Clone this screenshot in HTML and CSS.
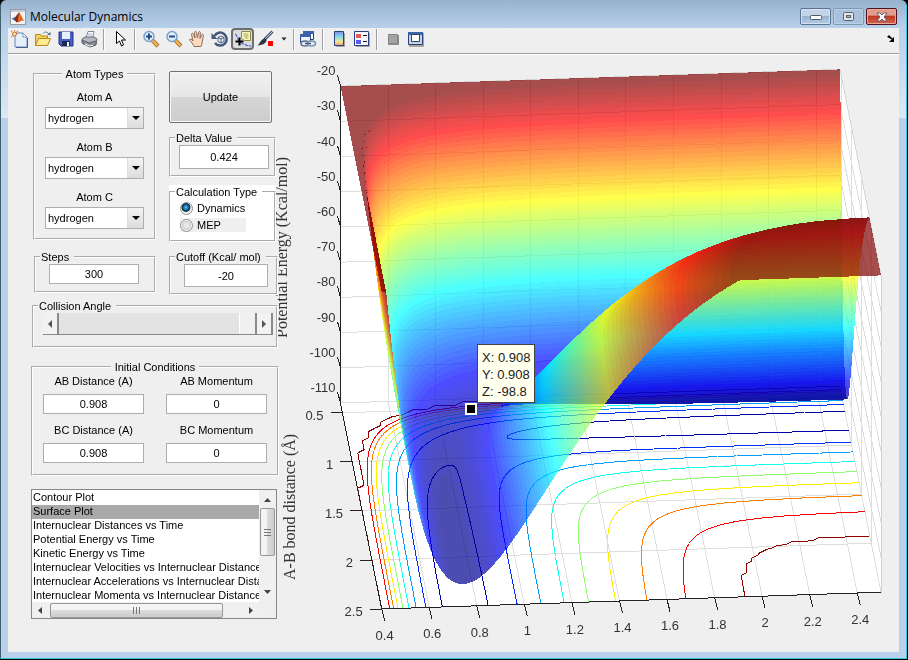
FILE: index.html
```html
<!DOCTYPE html>
<html lang="en">
<head>
<meta charset="utf-8">
<title>Molecular Dynamics</title>
<link rel="stylesheet" href="styles.css">
</head>
<body>
<div class="window">
  <header class="titlebar">
    <svg class="logo" viewBox="0 0 16 16" aria-hidden="true">
      <rect x=".5" y=".5" width="15" height="15" fill="#f4f4f6" stroke="#9a9a9e"/>
      <path d="M1 1h14v2H1z" fill="#c8ccd2"/>
      <path d="M1.500 9.500 5.500 8 8 4.500 9.500 3 8 10 5 12z" fill="#3b78b4"/>
      <path d="M5 8.500 9.300 3.200 9 12.500 6.500 13.500 4.500 10.500z" fill="#8a2c1a"/>
      <path d="M9.300 3.200C11 5 12 9 14.500 12 12 10.500 11 12 8.500 13.500 7 13 8.500 6 9.300 3.200z" fill="#e2692a"/>
    </svg>
    <h1>Molecular Dynamics</h1>
    <div class="winbtns">
      <button type="button" class="winbtn" aria-label="Minimize"><svg width="12" height="6" viewBox="0 0 12 6"><rect x=".5" y="1.500" width="11" height="4" rx="1" fill="#fff" stroke="#4c5a6c"/></svg></button>
      <button type="button" class="winbtn dim" aria-label="Maximize"><svg width="12" height="10" viewBox="0 0 12 10"><rect x=".5" y=".5" width="10" height="8" rx="1" fill="#e3e3e3" stroke="#566374"/><rect x="3.500" y="3.500" width="4" height="2" fill="#9eb4cc" stroke="#566374"/></svg></button>
      <button type="button" class="winbtn close" aria-label="Close"><svg width="12" height="10" viewBox="0 0 12 10"><path d="M1 1h3l2 2 2-2h3L8 5l3 4H8L6 7 4 9H1l3-4z" fill="#fff" stroke="#565a66" stroke-width=".9"/></svg></button>
    </div>
  </header>

  <nav class="toolbar" aria-label="Figure toolbar">
    <button type="button" aria-label="New"><svg viewBox="0 0 18 18"><path d="M4 3h8l4 4v10H4z" fill="#e3f0fb" stroke="#6286b4"/><path d="M12 3v4h4z" fill="#fff" stroke="#6286b4" stroke-width=".8"/><path d="M5 17.500h11.500V8" fill="none" stroke="#45608a"/><circle cx="3.500" cy="4" r="2" fill="#fbe3b0" stroke="#d0672c"/><path d="M0 1l1.500 1M7 1 5.500 2M0 7l1.500-1M3.500 0v1" stroke="#d0672c"/></svg></button>
    <button type="button" aria-label="Open"><svg viewBox="0 0 18 18"><path d="M1.500 15.500v-11h5l1 1.500h6v3" fill="#f3d161" stroke="#b98a1c"/><path d="m1.500 15.500 3-7h12l-3 7z" fill="#fdeb92" stroke="#b98a1c"/><path d="M9 3.500c2-2.500 5-1.500 6 1" fill="none" stroke="#5a7396"/><path d="m13 4.500 3.500 1 .2-3.500z" fill="#5a7396"/></svg></button>
    <button type="button" aria-label="Save"><svg viewBox="0 0 18 18"><path d="M2 2h14v14H4l-2-2z" fill="#4a5fc4" stroke="#27357e"/><path d="M5 2h8v7H5z" fill="#e8f0fd"/><path d="M5 11h8v5H5z" fill="#1f2850"/><path d="M10 12h2v4h-2z" fill="#f1f3fa"/></svg></button>
    <button type="button" aria-label="Print"><svg viewBox="0 0 18 18"><path d="M6 8 8 1.500h6L12.500 8z" fill="#fff" stroke="#7b89a0"/><path d="m2 9 3-2h9l3 2-1 5H3z" fill="#b4b7bd" stroke="#656a74"/><path d="m2 10 7 3 7-2v4l-6 2-8-4z" fill="#898d95" stroke="#5a5e66"/><path d="m5 14 5 2 3-1" stroke="#fff" fill="none"/><path d="m8 4 4 0M8 6l4 0" stroke="#9cb0d2"/></svg></button>
    <i class="sep"></i>
    <button type="button" aria-label="Select"><svg viewBox="0 0 18 18"><path d="M5.500 1.500v12l3-2.500 2 5 2-1-2-5h4z" fill="#fff" stroke="#000"/></svg></button>
    <i class="sep"></i>
    <button type="button" aria-label="Zoom in"><svg viewBox="0 0 18 18"><path d="m10 10 6 6" stroke="#a56217" stroke-width="4"/><path d="m10 10 5.500 5.500" stroke="#f1b250" stroke-width="2.500"/><circle cx="7" cy="6.500" r="5" fill="#dcf0fb" stroke="#7c9fc8" stroke-width="1.500"/><path d="M4 6.500h6M7 3.500v6" stroke="#244a86" stroke-width="2"/></svg></button>
    <button type="button" aria-label="Zoom out"><svg viewBox="0 0 18 18"><path d="m10 10 6 6" stroke="#a56217" stroke-width="4"/><path d="m10 10 5.500 5.500" stroke="#f1b250" stroke-width="2.500"/><circle cx="7" cy="6.500" r="5" fill="#dcf0fb" stroke="#7c9fc8" stroke-width="1.500"/><path d="M4 6.500h6" stroke="#244a86" stroke-width="2"/></svg></button>
    <button type="button" aria-label="Pan"><svg viewBox="0 0 18 18"><path d="M6 16.500C5 13 1 10.500 1.500 9.500s2-.5 3.500 1.500L3.500 4.500c0-1.500 1.500-1.500 2 0L7 8 6.500 2.500c0-1.500 2-1.500 2 0L9.500 8l1-5.500c.3-1.500 2-1.200 1.800.3L12 8.500l1.500-3.500c.6-1.200 2.300-.8 1.800.8C14.500 9 14.500 13 13 16.500z" fill="#fbdcc0" stroke="#8a6a58"/></svg></button>
    <button type="button" aria-label="Rotate"><svg viewBox="0 0 18 18"><path d="M3.500 6A6.500 6.500 0 1 1 4 13" fill="none" stroke="#42587c" stroke-width="2.500"/><path d="M.5 3v6h6z" fill="#42587c"/><path d="m7 7.500 3-1.500 3 1.500v4L10 13l-3-1.500zM7 7.500 10 9l3-1.500M10 9v4" fill="#f5f8fc" stroke="#42587c"/></svg></button>
    <button type="button" class="on" aria-label="Data cursor" aria-pressed="true"><svg viewBox="0 0 18 18"><path d="M1 4c2 0 2 4 4 7s5 3 7 4 3 1 5 1" fill="none" stroke="#2638e8" stroke-dasharray="4 1"/><path d="M7.500 1.500h9v9h-6l-3-2z" fill="#f8f6c0" stroke="#8d8a45"/><path d="M9.500 4h5M9.500 6h5M10.500 8h4" stroke="#a5a260"/><path d="M5.500 7.500v8M1.500 11.500h8" stroke="#000" stroke-width="2"/></svg></button>
    <button type="button" class="brush" aria-label="Brush"><svg viewBox="0 0 18 18"><path d="m15.500 1.500-8 8" stroke="#44557a" stroke-width="3"/><path d="m15.500 1.500-7 7" stroke="#c4d3ea"/><path d="M8 8.500c2 1 2 3 0 4.500-2 2-5 2-7.500 2.500C3 14 3 9.500 8 8.500z" fill="#30343c"/><path d="M11 11h5v5h-5z" fill="#f00"/></svg></button>
    <button type="button" class="caret" aria-label="Brush options"><svg viewBox="0 0 6 4"><path d="M.5.500h5L3 3.500z" fill="#222"/></svg></button>
    <i class="sep slim"></i>
    <button type="button" aria-label="Link plots"><svg viewBox="0 0 18 18"><path d="M4.500 1.500h10v8h-10z" fill="#fff" stroke="#24417e"/><path d="M4 1h11v3H4z" fill="#3c62a8"/><path d="M1.500 4.500h10v8h-10z" fill="#eef4fc" stroke="#24417e"/><path d="M1 4h11v3H1z" fill="#3c62a8"/><ellipse cx="6" cy="13.500" rx="4" ry="2.500" fill="#e4ebf2" stroke="#5a7190" stroke-width="1.500"/><ellipse cx="12.500" cy="13.500" rx="4" ry="2.500" fill="#e4ebf2" stroke="#7d93ad" stroke-width="1.500"/><path d="M6 13.500h6" stroke="#42587c" stroke-width="1.500"/></svg></button>
    <i class="sep"></i>
    <button type="button" aria-label="Colorbar"><svg viewBox="0 0 18 18"><defs><linearGradient id="cb" x1="0" y1="0" x2="0" y2="1"><stop offset="0" stop-color="#8d86ee"/><stop offset=".35" stop-color="#7ed8ee"/><stop offset=".7" stop-color="#efe69a"/><stop offset="1" stop-color="#f0a080"/></linearGradient></defs><path d="M6 3h9v14H6z" fill="#a5a5a5"/><path d="M4.500 1.500h9v14h-9z" fill="url(#cb)" stroke="#24417e"/></svg></button>
    <button type="button" aria-label="Legend"><svg viewBox="0 0 18 18"><path d="M3 3h14v14H3z" fill="#a5a5a5"/><path d="M1.500 1.500h14v14h-14z" fill="#f6f8fd" stroke="#24417e"/><path d="M3 4h5v4H3z" fill="#e25c5c"/><path d="M3 10h5v4H3z" fill="#5c5ce8"/><path d="M10 5.500h4M10 11.500h4" stroke="#111"/></svg></button>
    <i class="sep"></i>
    <button type="button" aria-label="Hide plot tools"><svg viewBox="0 0 18 18"><path d="M4 5h11v10H4z" fill="#8c8c8c"/><path d="M4.500 4.500h9v9h-9z" fill="#a3a3a3" stroke="#858585"/></svg></button>
    <button type="button" aria-label="Show plot tools"><svg viewBox="0 0 18 18"><path d="M2 3h15v14H2z" fill="#a5a5a5"/><path d="M1.500 2.500h14v12h-14z" fill="#cdd2da" stroke="#24417e"/><path d="M1 2h15v3H1z" fill="#3c62a8"/><path d="M4.500 4.500h8v7h-8z" fill="#fff" stroke="#24417e"/></svg></button>
    <button type="button" class="dock" aria-label="Dock"><svg viewBox="0 0 8 8"><path d="M7 2v5H2zM0 2l2-2 3 3 1 2-2-1z" fill="#000"/></svg></button>
  </nav>

  <main class="content">
    <form class="controls">
      <div class="columns">
        <div class="col left">
          <fieldset class="atoms">
            <legend>Atom Types</legend>
            <div class="field"><label for="a">Atom A</label><span class="combo"><select id="a"><option>hydrogen</option></select><i></i></span></div>
            <div class="field"><label for="b">Atom B</label><span class="combo"><select id="b"><option>hydrogen</option></select><i></i></span></div>
            <div class="field"><label for="c">Atom C</label><span class="combo"><select id="c"><option>hydrogen</option></select><i></i></span></div>
          </fieldset>
          <fieldset class="steps"><legend>Steps</legend><input type="text" value="300" aria-label="Steps"></fieldset>
        </div>
        <div class="col right">
          <button type="button" class="update">Update</button>
          <fieldset class="delta"><legend>Delta Value</legend><input type="text" value="0.424" aria-label="Delta Value"></fieldset>
          <fieldset class="calc"><legend>Calculation Type</legend>
            <label><input type="radio" name="calc" checked>Dynamics</label>
            <label class="grey"><input type="radio" name="calc">MEP</label>
          </fieldset>
          <fieldset class="cutoff"><legend>Cutoff (Kcal/ mol)</legend><input type="text" value="-20" aria-label="Cutoff"></fieldset>
        </div>
      </div>
      <fieldset class="angle"><legend>Collision Angle</legend>
        <div class="slider">
          <button type="button" aria-label="Decrease"><svg viewBox="0 0 4 8"><path d="M4 0v8L0 4z" fill="#555"/></svg></button>
          <input type="range" min="0" max="180" value="180" aria-label="Collision Angle">
          <button type="button" aria-label="Increase"><svg viewBox="0 0 4 8"><path d="M0 0v8l4-4z" fill="#555"/></svg></button>
        </div>
      </fieldset>
      <fieldset class="initial"><legend>Initial Conditions</legend>
        <div class="cells">
          <div class="cell"><label for="abd">AB Distance (A)</label><input id="abd" type="text" value="0.908"></div>
          <div class="cell"><label for="abm">AB Momentum</label><input id="abm" type="text" value="0"></div>
          <div class="cell"><label for="bcd">BC Distance (A)</label><input id="bcd" type="text" value="0.908"></div>
          <div class="cell"><label for="bcm">BC Momentum</label><input id="bcm" type="text" value="0"></div>
        </div>
      </fieldset>
      <div class="listbox">
        <select size="8" aria-label="Plot type">
          <option>Contour Plot</option>
          <option selected>Surface Plot</option>
          <option>Internuclear Distances vs Time</option>
          <option>Potential Energy vs Time</option>
          <option>Kinetic Energy vs Time</option>
          <option>Internuclear Velocities vs Internuclear Distance</option>
          <option>Internuclear Accelerations vs Internuclear Distance</option>
          <option>Internuclear Momenta vs Internuclear Distance</option>
        </select>
        <div class="vbar"><svg viewBox="0 0 7 4"><path d="M0 4h7L3.500 0z"/></svg><b></b><svg class="end" viewBox="0 0 7 4"><path d="M0 0h7L3.500 4z"/></svg></div>
        <div class="hbar"><svg viewBox="0 0 4 7"><path d="M4 0v7L0 3.500z"/></svg><b></b><svg class="end" viewBox="0 0 4 7"><path d="M0 0v7l4-3.500z"/></svg></div>
      </div>
    </form>
    <div class="plot" role="img" aria-label="Potential energy surface">
      <svg id="back" viewBox="277 55 622 597"></svg>
      <canvas id="surface" width="622" height="597"></canvas>
      <svg id="front" viewBox="277 55 622 597"></svg>
    </div>
  </main>
</div>
<script src="plot.js"></script>
</body>
</html>
```

FILE: styles.css
```css
* { box-sizing: border-box; }

body {
  margin: 0;
  background: #000;
  font: 11px/14px "Liberation Sans", Arial, sans-serif;
  color: #000;
}

.window {
  min-height: calc(100vh - 1px);
  margin: 0 1px 1px 0;
  padding: 0 7px 6px 7px;
  border: 1px solid #35c5dc;
  border-top: 0;
  border-left-color: #40606c;
  border-radius: 6px 6px 0 0;
  background: linear-gradient(#98b2ce 0, #b8d0ea 28px, #dce8f4 118px, #b9d1ea 118px);
}

button { margin: 0; padding: 0; border: 0; background: none; font: inherit; color: inherit; }
svg { display: block; }

/* title bar */
.titlebar { display: flex; align-items: center; height: 28px; padding: 5px 2px 0 2px; }
.logo { width: 16px; height: 16px; margin-right: 4px; }
h1 { flex: 1; margin: 0; font: 12px/16px "Open Sans", sans-serif; }
.winbtns { display: flex; gap: 2px; }
.winbtn {
  display: grid;
  place-items: center;
  width: 31px;
  height: 17px;
  border: 1px solid #5a7494;
  border-radius: 2px;
  box-shadow: inset 0 0 0 1px #d4e2f2;
  background: linear-gradient(#c3d4e7 45%, #9ab4d0 50%, #b4cce6);
}
.winbtn.dim { border-color: #8099b6; box-shadow: inset 0 0 0 1px #bcd0e6; background: #a8c1dc; }
.winbtn.close { border-color: #53131c; box-shadow: inset 0 0 0 1px #e9a99f; background: linear-gradient(#e39b8c 40%, #bd3a24 50%, #d4664e); }

/* toolbar */
.toolbar {
  display: flex;
  align-items: center;
  height: 27px;
  padding-bottom: 4px;
  background: #efefef;
  border-bottom: 1px solid #fff;
  box-shadow: inset 0 -1px 0 #a0a0a0;
}
.toolbar button { display: grid; place-items: center; width: 23px; height: 22px; flex: none; }
.toolbar svg { width: 18px; height: 18px; }
.toolbar .on { border: 2px solid #6e6e6e; border-radius: 4px; background: #dcdcdc; }
.toolbar .brush { width: 24px; }
.toolbar .caret { width: 12px; }
.toolbar .caret svg { width: 6px; height: 4px; }
.sep { width: 8px; height: 21px; flex: none; background: linear-gradient(90deg, transparent 3px, #a0a0a0 3px 4px, #fff 4px 5px, transparent 5px); }
.sep.slim { width: 6px; }
.toolbar .dock { width: 17px; margin-left: auto; }
.toolbar .dock svg { width: 8px; height: 8px; }

/* panels */
.content { display: flex; align-items: flex-start; background: #efefef; }
.controls { position: relative; z-index: 1; flex: none; width: 269px; padding: 12px 0 0 23px; }
fieldset { min-width: 0; margin: 0; padding: 0; border: 2px groove #fff; background: #efefef; }
legend { margin-left: 4px; padding: 0 5px 0 1px; background: #efefef; line-height: 14px; white-space: nowrap; }
input[type="text"] {
  display: block;
  min-width: 0;
  height: 20px;
  padding: 0;
  border: 1px solid #abadb3;
  background: #fff;
  font: inherit;
  text-align: center;
}
.columns { display: flex; gap: 13px; padding-left: 2px; }
.col { display: flex; flex-direction: column; }
.left { width: 123px; gap: 10px; }
.right { width: 107px; padding-top: 4px; gap: 8px; }

.atoms { height: 173px; padding-top: 9px; }
.atoms legend { margin: 0 auto; padding: 0 4px; }
.field { display: grid; justify-items: center; gap: 3px; margin-bottom: 11px; }
.combo { display: grid; width: 99px; }
.combo select {
  grid-area: 1 / 1;
  appearance: none;
  height: 22px;
  padding: 0 2px;
  border: 1px solid #abadb3;
  border-radius: 0;
  background: #fff;
  color: #000;
  font: inherit;
}
.combo i {
  grid-area: 1 / 1;
  place-self: center end;
  width: 16px;
  height: 20px;
  margin-right: 1px;
  border-left: 1px solid #ddd;
  background: linear-gradient(#f4f4f4, #dcdcdc);
  pointer-events: none;
  display: grid;
  place-items: center;
}
.combo i::after { content: ""; border: 4px solid transparent; border-top: 4px solid #000; border-bottom: 0; }

.steps { width: 122px; height: 43px; margin-left: 1px; }
.steps input { width: 90px; margin-left: 13px; }
.update {
  width: 103px;
  height: 52px;
  border: 1px solid #707070;
  border-radius: 2px;
  box-shadow: inset 0 0 0 1px #f7f7f7;
  background: linear-gradient(#f1f1f1, #e6e6e6 49%, #d6d6d6 50%, #cdcdcd);
}
.delta { height: 46px; }
.delta input { width: 90px; height: 24px; margin-left: 8px; }
.calc { height: 57px; background: #fff; box-shadow: 0 -2px 0 4px #fff; clip-path: inset(-3px 0 0 0); }
.calc legend { background: #fff; }
.calc label { display: flex; align-items: center; gap: 4px; height: 18px; margin-left: 9px; }
.calc .grey { width: 66px; height: 14px; margin-top: 1px; background: #efefef; }
input[type="radio"] {
  appearance: none;
  width: 13px;
  height: 13px;
  margin: 0;
  border: 1px solid #8e8f8f;
  border-radius: 50%;
  background: radial-gradient(#e8e8e8 30%, #ccc 55%, #f4f4f4 60%);
}
input[type="radio"]:checked { background: radial-gradient(circle at 45% 40%, #6fc7ee 0, #1c6da0 25%, #0d2f4e 45%, #f2f2f2 55%); }
.cutoff { width: 109px; height: 45px; }
.cutoff input { width: 84px; height: 23px; margin-left: 13px; }

.angle { width: 246px; height: 49px; margin: 4px 0 0 1px; }
.slider { display: flex; height: 22px; margin: 0 3px 0 9px; border-bottom: 1px solid #888; }
.slider button { display: grid; place-items: center; width: 16px; border-right: 2px solid #8a8a8a; background: #f2f2f2; }
.slider svg { width: 4px; height: 8px; }
.slider input { appearance: none; flex: 1; min-width: 0; height: 21px; margin: 0; background: #e3e3e3; }
.slider input::-webkit-slider-thumb { appearance: none; width: 18px; height: 21px; border-left: 1px solid #fff; border-right: 2px solid #8a8a8a; background: #f0f0f0; }

.initial { width: 248px; height: 116px; margin-top: 12px; }
.initial legend { margin: 0 auto; padding: 0 4px; }
.cells { display: grid; grid-template-columns: 101px 101px; justify-content: space-between; gap: 9px 0; margin: 0 10px; }
.cell { display: grid; gap: 6px; text-align: center; }
.cell input { width: 101px; }

.listbox {
  display: grid;
  grid-template: 112px 16px / 1fr 17px;
  width: 246px;
  height: 130px;
  margin-top: 13px;
  border: 1px solid #828790;
  background: #efefef;
}
.listbox select {
  min-width: 0;
  height: 112px;
  padding: 1px 0 0;
  border: 0;
  border-radius: 0;
  background: #fff;
  color: #000;
  font: inherit;
  overflow: hidden;
  scrollbar-width: none;
}
.listbox option { min-height: 14px; height: 14px; padding: 0 1px; line-height: 14px; color: #000; }
.listbox option:checked { background: #a9a9a9 linear-gradient(#a9a9a9, #a9a9a9); color: #000; }
.vbar, .hbar { display: flex; align-items: center; background: #f0f0f0; fill: #444; }
.vbar { flex-direction: column; padding: 8px 0; }
.vbar svg { width: 7px; height: 4px; }
.hbar { padding: 0 6px; }
.hbar svg { width: 4px; height: 7px; }
.end { margin-top: auto; }
.hbar .end { margin: 0 0 0 auto; }
.vbar b, .hbar b { border: 1px solid #979797; border-radius: 2px; }
.vbar b {
  width: 15px;
  height: 48px;
  margin-top: 6px;
  background: repeating-linear-gradient(#777 0 1px, transparent 1px 3px) center / 7px 7px no-repeat, linear-gradient(90deg, #f4f4f4 45%, #dcdcdc 50%, #ccc);
}
.hbar b {
  width: 173px;
  height: 15px;
  margin-left: 8px;
  background: repeating-linear-gradient(90deg, #777 0 1px, transparent 1px 3px) center / 7px 7px no-repeat, linear-gradient(#f4f4f4 45%, #dcdcdc 50%, #ccc);
}

/* plot: three stacked layers sharing one grid cell */
.plot { display: grid; flex: 1; min-width: 0; }
.plot > * { grid-area: 1 / 1; width: 100%; height: auto; display: block; }
.plot svg { overflow: visible; }
.plot text { font: 13px "Liberation Sans", Arial, sans-serif; fill: #333; }
.plot text.axis { font: 16px "Liberation Serif", "Times New Roman", serif; fill: #333; }
.plot text.tip { fill: #222; }
.wall { fill: #fff; }
.grid { fill: none; stroke: #000; stroke-opacity: .13; shape-rendering: crispEdges; }
.edge { fill: none; stroke: #222; shape-rendering: crispEdges; }
.contour { fill: none; shape-rendering: crispEdges; }
.tipbox { fill: #ffffee; stroke: #444; shape-rendering: crispEdges; }
.marker { fill: #000; stroke: #ffffee; stroke-width: 2; }
```

FILE: plot.js
```js
// Collinear LEPS potential for three hydrogen atoms, drawn in an orthographic view.
const D = 103.8, BETA = 1.985, RE = 0.742, SATO = 0.18, CUTOFF = -20;
const MIN = 0.4, MAX = 2.5, FLOOR = -110;

function pair(r) {
  const e1 = Math.exp(-BETA * (r - RE)), e2 = e1 * e1;
  return [D / 4 * ((3 + SATO) * e2 - (2 + 6 * SATO) * e1),
          D / 4 * ((1 + 3 * SATO) * e2 - (6 + 2 * SATO) * e1)];
}
function energy(x, y) {
  const [qa, ja] = pair(x), [qb, jb] = pair(y), [qc, jc] = pair(x + y);
  const j = Math.sqrt(((ja - jb) ** 2 + (jb - jc) ** 2 + (jc - ja) ** 2) / 2);
  return Math.min(CUTOFF, (qa + qb + qc - j) / (1 + SATO));
}
function project(x, y, z) {
  return [340.5 + (x - MIN) * 237.8 + (y - MIN) * 19.6,
          403 - (x - MIN) * 8 + (y - MIN) * 98.1 - (z - FLOOR) * 3.52];
}
function jet(t) {
  const c = k => Math.round(255 * Math.max(0, Math.min(1, 1.5 - Math.abs(4 * t - k))));
  return [c(3), c(2), c(1)];
}

const N = 210, step = (MAX - MIN) / N;
const at = i => MIN + i * step;
const V = [];
for (let j = 0; j <= N; j++) {
  V.push([]);
  for (let i = 0; i <= N; i++) V[j].push(energy(at(i), at(j)));
}

const svgNS = 'http://www.w3.org/2000/svg';
function add(parent, name, attrs, text) {
  const el = document.createElementNS(svgNS, name);
  for (const k in attrs) el.setAttribute(k, attrs[k]);
  if (text !== undefined) el.textContent = text;
  parent.appendChild(el);
}
const line = pts => 'M' + pts.map(p => p[0].toFixed(1) + ' ' + p[1].toFixed(1)).join('L');
const xs = [0.4, 0.6, 0.8, 1, 1.2, 1.4, 1.6, 1.8, 2, 2.2, 2.4];
const ys = [0.5, 1, 1.5, 2, 2.5];
const zs = [-20, -30, -40, -50, -60, -70, -80, -90, -100, -110];

// Walls and grid
const back = document.getElementById('back');
add(back, 'path', { class: 'wall', d: line([
  project(MIN, MIN, -20), project(MAX, MIN, -20), project(MAX, MAX, -20),
  project(MAX, MAX, FLOOR), project(MIN, MAX, FLOOR), project(MIN, MIN, FLOOR)]) + 'Z' });
let grid = '';
for (const x of xs) grid += line([project(x, MIN, -20), project(x, MIN, FLOOR), project(x, MAX, FLOOR)]);
for (const y of ys) grid += line([project(MIN, y, FLOOR), project(MAX, y, FLOOR), project(MAX, y, -20)]);
for (const z of zs) grid += line([project(MIN, MIN, z), project(MAX, MIN, z), project(MAX, MAX, z)]);
add(back, 'path', { class: 'grid', d: grid });

// Contours on the floor; the cutoff level is traced on a coarser mesh
const levels = [[-100, '#0000aa', 1], [-90, '#0030ff', 1], [-80, '#009fff', 1], [-70, '#10ffef', 1],
  [-60, '#8fff70', 1], [-50, '#ffef00', 1], [-40, '#ff8000', 1], [-30, '#ff0000', 1], [-20.02, '#8f0000', 3]];
for (const [level, stroke, s] of levels) {
  let d = '';
  for (let j = 0; j < N; j += s) {
    for (let i = 0; i < N; i += s) {
      const c = [[i, j], [i + s, j], [i + s, j + s], [i, j + s]];
      const hits = [];
      for (let k = 0; k < 4; k++) {
        const a = c[k], b = c[(k + 1) % 4];
        const va = V[a[1]][a[0]] - level, vb = V[b[1]][b[0]] - level;
        if ((va < 0) !== (vb < 0)) {
          const t = va / (va - vb);
          hits.push(project(at(a[0] + t * (b[0] - a[0])), at(a[1] + t * (b[1] - a[1])), FLOOR));
        }
      }
      for (let k = 0; k + 1 < hits.length; k += 2) d += line([hits[k], hits[k + 1]]);
    }
  }
  add(back, 'path', { class: 'contour', stroke, d });
}

// Surface: translucent cells coloured by height in 64 steps, painted far to near
const canvas = document.getElementById('surface');
const W = canvas.width, H = canvas.height, OX = 277, OY = 55, ALPHA = 0.7;
const ctx = canvas.getContext('2d');
const buf = new Float32Array(W * H * 4);
let low = 0;
for (const row of V) for (const v of row) low = Math.min(low, v);
const palette = [];
for (let n = 1; n <= 64; n++) palette.push(jet(n / 64));
const shade = v => palette[Math.max(0, Math.min(63, Math.floor((v - low) / (CUTOFF - low) * 64)))];

// Position and height where edge a-b meets scanline y
function crossing(a, b, y) {
  const t = (y - a[1]) / (b[1] - a[1]);
  return [a[0] + t * (b[0] - a[0]), a[2] + t * (b[2] - a[2])];
}
function triangle(p, q, r) {
  const [a, b, c] = [p, q, r].sort((m, n) => m[1] - n[1] || m[0] - n[0]);
  const y1 = Math.min(H, Math.ceil(c[1] - 0.5));
  for (let y = Math.max(0, Math.ceil(a[1] - 0.5)); y < y1; y++) {
    const yc = y + 0.5;
    let l = crossing(a, c, yc);
    let m = yc <= b[1] ? crossing(a, b, yc) : crossing(b, c, yc);
    if (l[0] > m[0]) [l, m] = [m, l];
    const slope = (m[1] - l[1]) / (m[0] - l[0]);
    const x1 = Math.min(W, Math.ceil(m[0] - 0.5));
    for (let x = Math.max(0, Math.ceil(l[0] - 0.5)); x < x1; x++) {
      const rgb = shade(l[1] + (x + 0.5 - l[0]) * slope);
      const o = (y * W + x) * 4;
      for (let k = 0; k < 3; k++) buf[o + k] = rgb[k] * ALPHA + buf[o + k] * (1 - ALPHA);
      buf[o + 3] = ALPHA + buf[o + 3] * (1 - ALPHA);
    }
  }
}
const P = V.map((row, j) => row.map((v, i) => {
  const p = project(at(i), at(j), v);
  return [p[0] - OX, p[1] - OY, v];
}));
for (let j = 0; j < N; j++) {
  for (let i = N - 1; i >= 0; i--) {
    triangle(P[j][i], P[j][i + 1], P[j + 1][i + 1]);
    triangle(P[j][i], P[j + 1][i + 1], P[j + 1][i]);
  }
}
const image = ctx.createImageData(W, H);
for (let o = 0; o < buf.length; o += 4) {
  const a = buf[o + 3];
  if (a > 0) {
    for (let k = 0; k < 3; k++) image.data[o + k] = buf[o + k] / a;
    image.data[o + 3] = a * 255;
  }
}
ctx.putImageData(image, 0, 0);

// Axes, tick labels and data tip
const front = document.getElementById('front');
let axes = line([project(MIN, MIN, -20), project(MIN, MIN, FLOOR), project(MIN, MAX, FLOOR), project(MAX, MAX, FLOOR)]);
for (const x of xs) {
  const [px, py] = project(x, MAX, FLOOR);
  axes += line([[px, py], [px + 3, py + 12]]);
  add(front, 'text', { x: px + 3, y: py + 31, 'text-anchor': 'middle' }, x);
}
for (const y of ys) {
  const [px, py] = project(MIN, y, FLOOR);
  axes += line([[px, py], [px - 12, py]]);
  add(front, 'text', { x: px - 19, y: py + 7, 'text-anchor': 'end' }, y);
}
for (const z of zs) {
  const [px, py] = project(MIN, MIN, z);
  axes += line([[px, py], [px - 3, py - 11]]);
  add(front, 'text', { x: px - 5, y: py - 11, 'text-anchor': 'end' }, z);
}
add(front, 'path', { class: 'edge', d: axes });
add(front, 'text', { class: 'axis', transform: 'translate(287 338) rotate(-90)' }, 'Potential Energy (Kcal/mol)');
add(front, 'text', { class: 'axis', transform: 'translate(295 580) rotate(-90)' }, 'A-B bond distance (Å)');
add(front, 'rect', { class: 'marker', x: 466, y: 404, width: 10, height: 10 });
add(front, 'rect', { class: 'tipbox', x: 477.5, y: 344.5, width: 57, height: 58 });
['X: 0.908', 'Y: 0.908', 'Z: -98.8'].forEach((t, i) => add(front, 'text', { class: 'tip', x: 482, y: 362 + 17 * i }, t));
```
